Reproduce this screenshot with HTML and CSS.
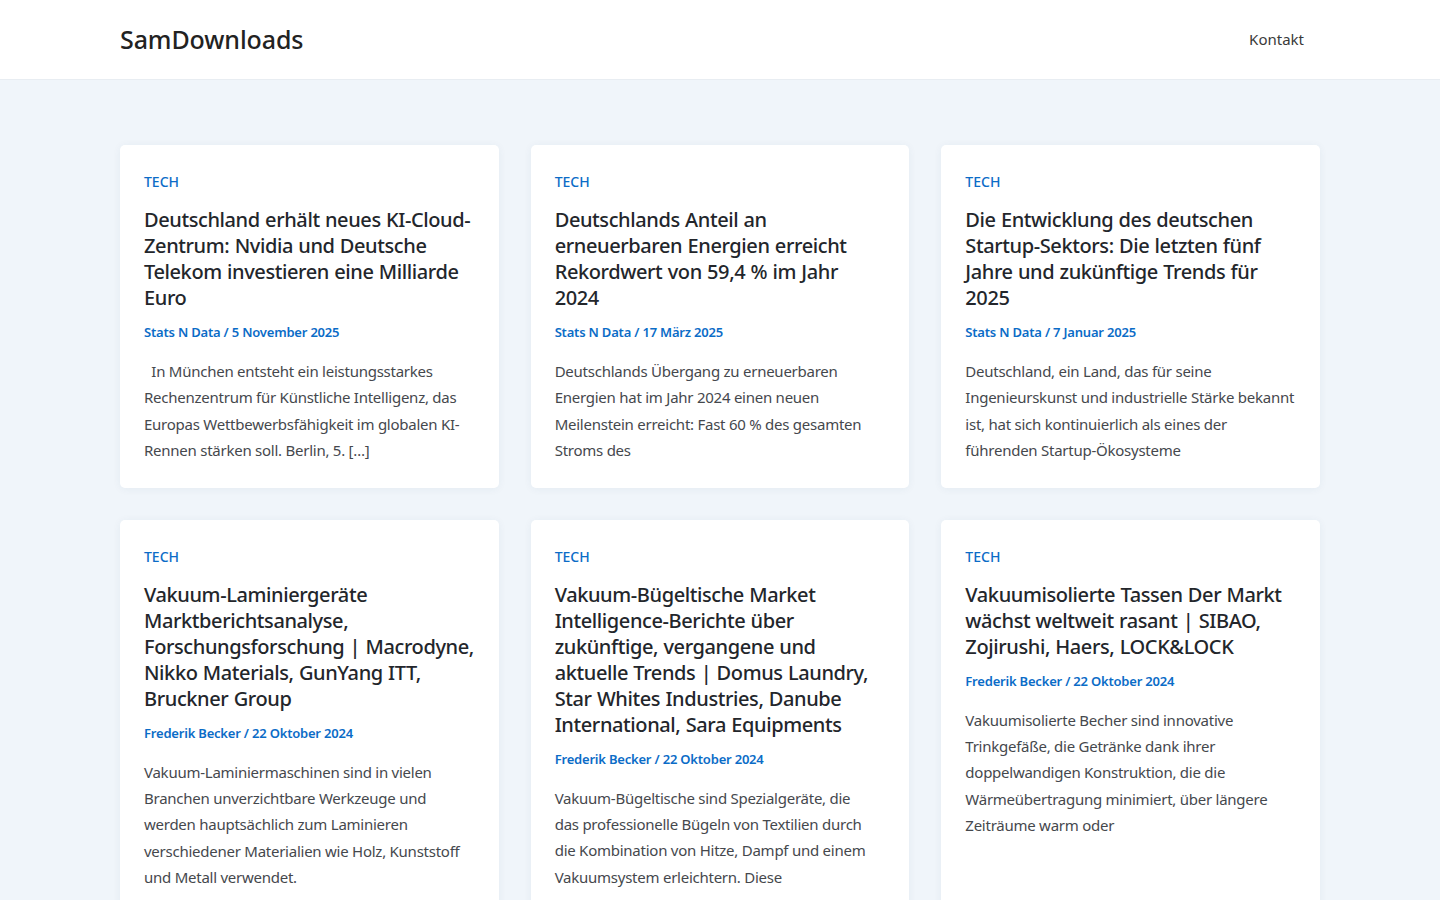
FILE: index.html
```html
<!DOCTYPE html>
<html lang="de">
<head>
<meta charset="utf-8">
<title>SamDownloads</title>
<link rel="stylesheet" href="styles.css">
</head>
<body>
<header class="site-header">
  <div class="container header-inner">
    <a class="logo" href="#">SamDownloads</a>
    <nav class="nav"><a href="#">Kontakt</a></nav>
  </div>
</header>
<main class="container grid">
  <article class="card">
    <div class="cat">TECH</div>
    <h2 class="title">Deutschland erhält neues KI-Cloud-Zentrum: Nvidia und Deutsche Telekom investieren eine Milliarde Euro</h2>
    <div class="meta">Stats N Data / 5 November 2025</div>
    <p class="excerpt">&nbsp; In München entsteht ein leistungsstarkes Rechenzentrum für Künstliche Intelligenz, das Europas Wettbewerbsfähigkeit im globalen KI-Rennen stärken soll. Berlin, 5. […]</p>
  </article>
  <article class="card">
    <div class="cat">TECH</div>
    <h2 class="title">Deutschlands Anteil an erneuerbaren Energien erreicht Rekordwert von 59,4 % im Jahr 2024</h2>
    <div class="meta">Stats N Data / 17 März 2025</div>
    <p class="excerpt">Deutschlands Übergang zu erneuerbaren Energien hat im Jahr 2024 einen neuen Meilenstein erreicht: Fast 60 % des gesamten Stroms des</p>
  </article>
  <article class="card">
    <div class="cat">TECH</div>
    <h2 class="title">Die Entwicklung des deutschen Startup-Sektors: Die letzten fünf Jahre und zukünftige Trends für 2025</h2>
    <div class="meta">Stats N Data / 7 Januar 2025</div>
    <p class="excerpt">Deutschland, ein Land, das für seine Ingenieurskunst und industrielle Stärke bekannt ist, hat sich kontinuierlich als eines der führenden Startup-Ökosysteme</p>
  </article>
  <article class="card">
    <div class="cat">TECH</div>
    <h2 class="title">Vakuum-Laminiergeräte Marktberichtsanalyse, Forschungsforschung | Macrodyne, Nikko Materials, GunYang ITT, Bruckner Group</h2>
    <div class="meta">Frederik Becker / 22 Oktober 2024</div>
    <p class="excerpt">Vakuum-Laminiermaschinen sind in vielen Branchen unverzichtbare Werkzeuge und werden hauptsächlich zum Laminieren verschiedener Materialien wie Holz, Kunststoff und Metall verwendet.</p>
  </article>
  <article class="card">
    <div class="cat">TECH</div>
    <h2 class="title">Vakuum-Bügeltische Market Intelligence-Berichte über zukünftige, vergangene und aktuelle Trends | Domus Laundry, Star Whites Industries, Danube International, Sara Equipments</h2>
    <div class="meta">Frederik Becker / 22 Oktober 2024</div>
    <p class="excerpt">Vakuum-Bügeltische sind Spezialgeräte, die<br>das professionelle Bügeln von Textilien durch die Kombination von Hitze, Dampf und einem Vakuumsystem erleichtern. Diese</p>
  </article>
  <article class="card">
    <div class="cat">TECH</div>
    <h2 class="title">Vakuumisolierte Tassen Der Markt wächst weltweit rasant | SIBAO, Zojirushi, Haers, LOCK&amp;LOCK</h2>
    <div class="meta">Frederik Becker / 22 Oktober 2024</div>
    <p class="excerpt">Vakuumisolierte Becher sind innovative Trinkgefäße, die Getränke dank ihrer doppelwandigen Konstruktion, die die Wärmeübertragung minimiert, über längere Zeiträume warm oder</p>
  </article>
</main>
</body>
</html>
```
FILE: styles.css
```css
* { box-sizing: border-box; }
html, body { margin: 0; padding: 0; }
body {
  background: #f0f5fa;
  font-family: "Noto Sans", "Open Sans", sans-serif;
  color: #3a3a3a;
}
a { text-decoration: none; color: inherit; }
.container {
  width: 1200px;
  margin: 0 auto;
}
.site-header {
  background: #fff;
  height: 80px;
  border-bottom: 1px solid #e8edf2;
}
.header-inner {
  height: 100%;
  display: flex;
  align-items: center;
  justify-content: space-between;
  padding-right: 16px;
  padding-bottom: 1px;
}
.logo {
  font-size: 25px;
  font-weight: 500;
  color: #222;
  letter-spacing: -0.1px;
}
.nav a {
  font-size: 15px;
  color: #3a3a3a;
}
.grid {
  display: grid;
  grid-template-columns: repeat(3, 1fr);
  gap: 32px 32px;
  padding-top: 65px;
}
.card {
  background: #fff;
  border-radius: 5px;
  box-shadow: 0 1px 8px rgba(30, 60, 100, 0.06);
  padding: 28px 24px 24px;
}
.cat {
  font-size: 14px;
  font-weight: 500;
  color: #0b6cc7;
  line-height: 18px;
}
.title {
  margin: 16px 0 0;
  font-size: 20px;
  font-weight: 500;
  line-height: 26px;
  letter-spacing: -0.4px;
  word-spacing: 0.5px;
  color: #23262b;
}
.meta {
  margin-top: 12px;
  font-size: 13px;
  font-weight: 600;
  letter-spacing: -0.2px;
  color: #0b6cc7;
  line-height: 18px;
}
.excerpt {
  margin: 17px 0 0;
  font-size: 15px;
  line-height: 26.4px;
  letter-spacing: -0.25px;
  color: #45484d;
}
```
